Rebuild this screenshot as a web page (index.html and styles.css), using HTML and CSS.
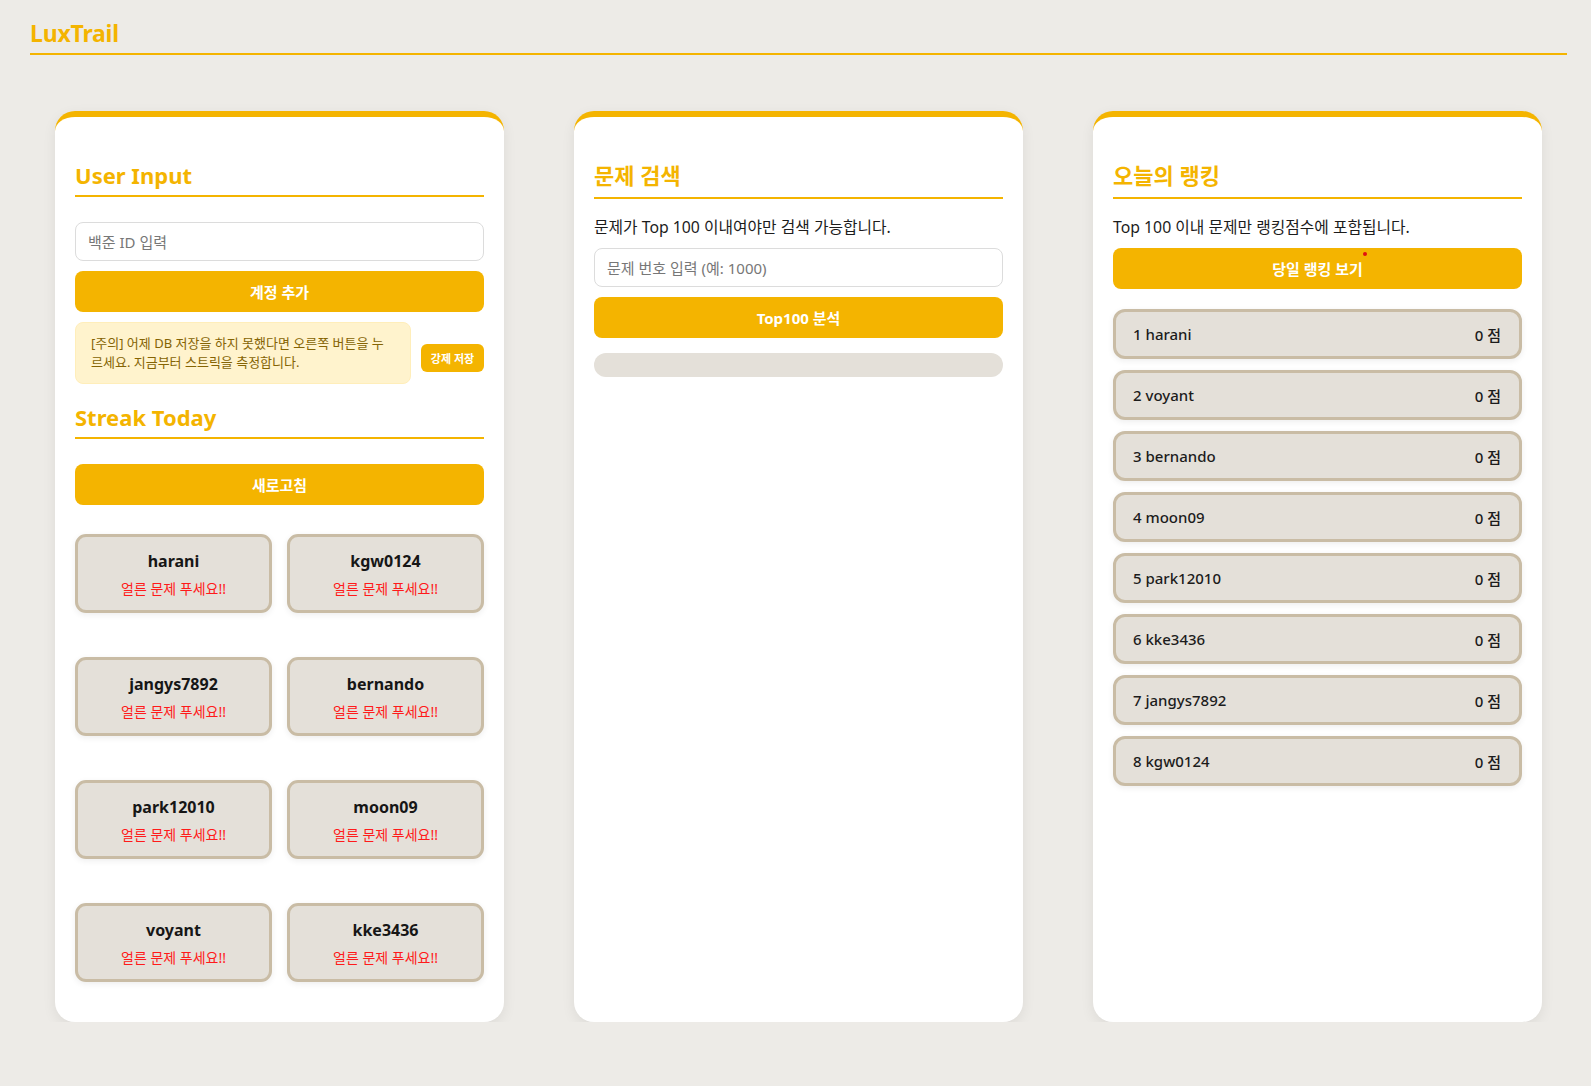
FILE: index.html
```html
<!DOCTYPE html>
<html lang="ko">
<head>
<meta charset="utf-8">
<title>LuxTrail</title>
<link rel="stylesheet" href="styles.css">
</head>
<body>
<header class="site-header">
  <h1 class="logo">LuxTrail</h1>
</header>
<main class="columns">
  <section class="card">
    <h2 class="title">User Input</h2>
    <input class="field mt25" type="text" placeholder="백준 ID 입력">
    <button class="btn mt10">계정 추가</button>
    <div class="notice-row mt10">
      <div class="notice">[주의] 어제 DB 저장을 하지 못했다면 오른쪽 버튼을 누르세요. 지금부터 스트릭을 측정합니다.</div>
      <button class="btn-small">강제 저장</button>
    </div>
    <h2 class="title">Streak Today</h2>
    <button class="btn mt25">새로고침</button>
    <div class="streak-grid">
      <div class="streak"><div class="streak-name">harani</div><div class="streak-msg">얼른 문제 푸세요!!</div></div>
      <div class="streak"><div class="streak-name">kgw0124</div><div class="streak-msg">얼른 문제 푸세요!!</div></div>
      <div class="streak"><div class="streak-name">jangys7892</div><div class="streak-msg">얼른 문제 푸세요!!</div></div>
      <div class="streak"><div class="streak-name">bernando</div><div class="streak-msg">얼른 문제 푸세요!!</div></div>
      <div class="streak"><div class="streak-name">park12010</div><div class="streak-msg">얼른 문제 푸세요!!</div></div>
      <div class="streak"><div class="streak-name">moon09</div><div class="streak-msg">얼른 문제 푸세요!!</div></div>
      <div class="streak"><div class="streak-name">voyant</div><div class="streak-msg">얼른 문제 푸세요!!</div></div>
      <div class="streak"><div class="streak-name">kke3436</div><div class="streak-msg">얼른 문제 푸세요!!</div></div>
    </div>
  </section>

  <section class="card">
    <h2 class="title ko">문제 검색</h2>
    <p class="desc">문제가 Top 100 이내여야만 검색 가능합니다.</p>
    <input class="field mt10" type="text" placeholder="문제 번호 입력 (예: 1000)">
    <button class="btn mt10">Top100 분석</button>
    <div class="progress"></div>
  </section>

  <section class="card">
    <h2 class="title ko">오늘의 랭킹</h2>
    <p class="desc">Top 100 이내 문제만 랭킹점수에 포함됩니다.</p>
    <button class="btn mt10 btn-dot">당일 랭킹 보기<span class="dot"></span></button>
    <ul class="rank-list">
      <li class="rank"><span>1 harani</span><span>0 점</span></li>
      <li class="rank"><span>2 voyant</span><span>0 점</span></li>
      <li class="rank"><span>3 bernando</span><span>0 점</span></li>
      <li class="rank"><span>4 moon09</span><span>0 점</span></li>
      <li class="rank"><span>5 park12010</span><span>0 점</span></li>
      <li class="rank"><span>6 kke3436</span><span>0 점</span></li>
      <li class="rank"><span>7 jangys7892</span><span>0 점</span></li>
      <li class="rank"><span>8 kgw0124</span><span>0 점</span></li>
    </ul>
  </section>
</main>
</body>
</html>
```

FILE: styles.css
```css
* { box-sizing: border-box; }

body {
  margin: 0;
  background: #edebe7;
  font-family: "Noto Sans", "Noto Sans CJK KR", sans-serif;
  color: #1c1c1c;
}

.site-header {
  margin: 0 24px 0 30px;
  padding-top: 18px;
  padding-bottom: 5px;
  border-bottom: 2px solid #f4b400;
}

.logo {
  margin: 0;
  font-size: 23px;
  line-height: 30px;
  font-weight: 700;
  letter-spacing: -0.2px;
  color: #f4b400;
}

.columns {
  margin: 56px 24px 0 30px;
  padding: 0 25px;
  display: flex;
  gap: 70px;
  align-items: stretch;
}

.card {
  flex: 1 1 0;
  min-width: 0;
  display: flex;
  flex-direction: column;
  background: #fff;
  border-top: 6px solid #f4b400;
  border-radius: 20px;
  padding: 25px 20px 25px;
  box-shadow: 0 4px 14px rgba(0, 0, 0, 0.07);
}

.title {
  margin: 18px 0 0;
  font-size: 22px;
  line-height: 30px;
  font-weight: 700;
  color: #f4b400;
  padding-bottom: 5px;
  border-bottom: 2px solid #f4b400;
}

.title.ko { padding-bottom: 7px; }

.mt25 { margin-top: 25px; }
.mt10 { margin-top: 10px; }

.field {
  display: block;
  width: 100%;
  height: 39px;
  padding: 0 12px;
  border: 1px solid #dcdcdc;
  border-radius: 8px;
  font-family: "Noto Sans", "Noto Sans CJK KR", sans-serif;
  font-size: 15px;
  color: #333;
  background: #fff;
}

.field::placeholder { color: #777; }

.btn {
  display: block;
  width: 100%;
  height: 41px;
  border: 0;
  border-radius: 8px;
  background: #f4b400;
  color: #fff;
  font-family: "Noto Sans", "Noto Sans CJK KR", sans-serif;
  font-size: 15px;
  font-weight: 700;
}

.btn-dot { position: relative; }

.dot {
  position: absolute;
  left: 250px;
  top: 4px;
  width: 4px;
  height: 4px;
  border-radius: 50%;
  background: #e01010;
}

.notice-row {
  display: flex;
  align-items: flex-end;
  gap: 10px;
}

.notice {
  flex: 1 1 auto;
  min-width: 0;
  padding: 11px 15px;
  background: #fff3cd;
  border: 1px solid #ffeeba;
  border-radius: 8px;
  color: #856404;
  font-size: 13px;
  line-height: 19px;
}

.btn-small {
  flex: 0 0 auto;
  width: 63px;
  height: 28px;
  margin-bottom: 12px;
  border: 0;
  border-radius: 6px;
  background: #f4b400;
  color: #fff;
  font-family: "Noto Sans", "Noto Sans CJK KR", sans-serif;
  font-size: 11px;
  font-weight: 700;
  padding: 0;
}

.streak-grid {
  margin: 29px 0 15px;
  display: grid;
  grid-template-columns: 1fr 1fr;
  column-gap: 15px;
  row-gap: 44px;
}

.streak {
  height: 79px;
  border: 3px solid #c9bca5;
  border-radius: 11px;
  background: #e4e0d9;
  padding: 12px 8px 0;
  text-align: center;
  box-shadow: 0 2px 6px rgba(0, 0, 0, 0.07);
}

.streak-name {
  font-size: 16px;
  line-height: 24px;
  font-weight: 700;
  color: #161616;
}

.streak-msg {
  margin-top: 6px;
  font-size: 14px;
  line-height: 20px;
  color: #ff1a1a;
}

.desc {
  margin: 17px 0 0;
  font-size: 15.8px;
  line-height: 22px;
  color: #1c1c1c;
}

.progress {
  margin-top: 15px;
  height: 24px;
  border-radius: 12px;
  background: #e4e0d9;
}

.rank-list {
  list-style: none;
  margin: 20px 0 0;
  padding: 0;
  display: flex;
  flex-direction: column;
  gap: 11px;
}

.rank {
  height: 50px;
  display: flex;
  align-items: center;
  justify-content: space-between;
  padding: 0 18px 0 17px;
  border: 3px solid #c9bca5;
  border-radius: 12px;
  background: #e4e0d9;
  font-size: 15px;
  font-weight: 500;
  color: #1c1c1c;
  box-shadow: 0 2px 6px rgba(0, 0, 0, 0.07);
}
```
